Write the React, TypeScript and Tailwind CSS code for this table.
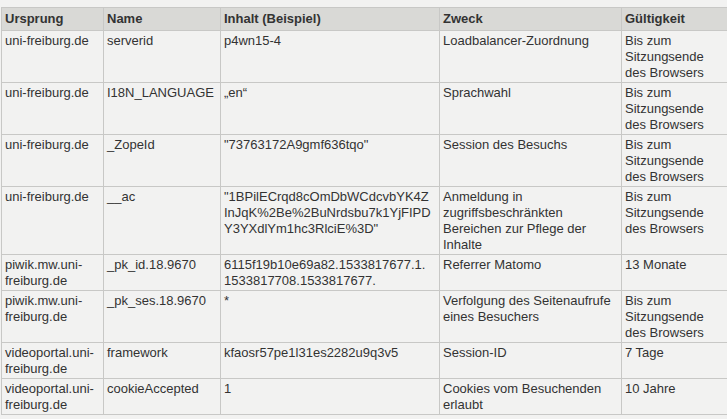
const rows = [
  ["uni-freiburg.de", "serverid", "p4wn15-4", "Loadbalancer-Zuordnung", "Bis zum Sitzungsende des Browsers"],
  ["uni-freiburg.de", "I18N_LANGUAGE", "„en“", "Sprachwahl", "Bis zum Sitzungsende des Browsers"],
  ["uni-freiburg.de", "_ZopeId", "\"73763172A9gmf636tqo\"", "Session des Besuchs", "Bis zum Sitzungsende des Browsers"],
  [
    "uni-freiburg.de",
    "__ac",
    "\"1BPilECrqd8cOmDbWCdcvbYK4Z\nInJqK%2Be%2BuNrdsbu7k1YjFIPD\nY3YXdlYm1hc3RlciE%3D\"",
    "Anmeldung in zugriffsbeschränkten Bereichen zur Pflege der Inhalte",
    "Bis zum Sitzungsende des Browsers",
  ],
  ["piwik.mw.uni-freiburg.de", "_pk_id.18.9670", "6115f19b10e69a82.1533817677.1.\n1533817708.1533817677.", "Referrer Matomo", "13 Monate"],
  ["piwik.mw.uni-freiburg.de", "_pk_ses.18.9670", "*", "Verfolgung des Seitenaufrufe eines Besuchers", "Bis zum Sitzungsende des Browsers"],
  ["videoportal.uni-freiburg.de", "framework", "kfaosr57pe1l31es2282u9q3v5", "Session-ID", "7 Tage"],
  ["videoportal.uni-freiburg.de", "cookieAccepted", "1", "Cookies vom Besuchenden erlaubt", "10 Jahre"],
];

const heads = ["Ursprung", "Name", "Inhalt (Beispiel)", "Zweck", "Gültigkeit"];

export default function App() {
  return (
    <div className="w-[727px] h-[419px] bg-[#f2f2f1] pt-[7px] pl-px font-['Liberation_Sans',Arial,sans-serif] text-[13px] leading-4 text-[#333]">
      <table className="table-fixed w-[726px] border-collapse">
        <colgroup>
          <col className="w-[102px]" />
          <col className="w-[117px]" />
          <col className="w-[219px]" />
          <col className="w-[182px]" />
          <col className="w-[106px]" />
        </colgroup>
        <thead>
          <tr className="bg-[#d9d9d6]">
            {heads.map((h) => (
              <th key={h} className="border border-[#c8c8c6] px-[3px] pt-[3px] pb-[3px] text-left align-top font-bold">
                {h}
              </th>
            ))}
          </tr>
        </thead>
        <tbody>
          {rows.map((r, i) => (
            <tr key={i}>
              {r.map((c, j) => (
                <td
                  key={j}
                  className={
                    "border border-[#c8c8c6] px-[3px] pt-[2px] pb-[1px] align-top" +
                    (j === 2 ? " whitespace-pre-line" : "")
                  }
                >
                  {c}
                </td>
              ))}
            </tr>
          ))}
        </tbody>
      </table>
    </div>
  );
}
